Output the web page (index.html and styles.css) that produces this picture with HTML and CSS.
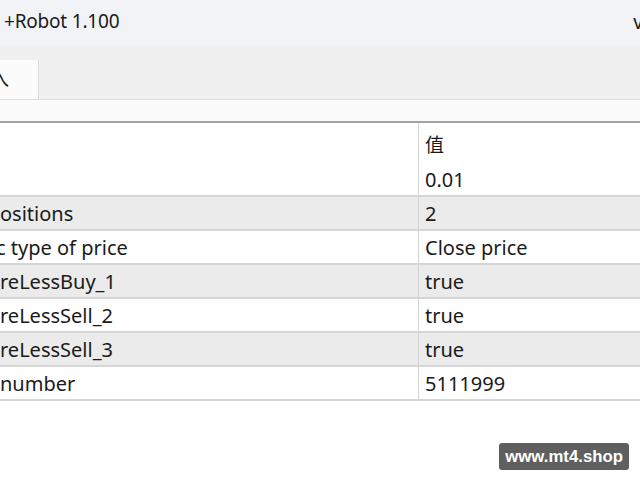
FILE: index.html
```html
<!DOCTYPE html>
<html lang="zh">
<head>
<meta charset="utf-8">
<title>Robot 1.100</title>
<link rel="stylesheet" href="styles.css">
</head>
<body>
<div class="window">
  <header class="titlebar">
    <span class="title">+Robot 1.100</span>
    <span class="title-right">v</span>
  </header>
  <nav class="tabstrip">
    <div class="tab"><span class="tab-label">入</span></div>
  </nav>
  <div class="subbar"></div>
  <div class="params">
    <div class="cell name head"></div>
    <div class="cell value head">值</div>

    <div class="cell name"></div>
    <div class="cell value">0.01</div>

    <div class="cell name alt">ositions</div>
    <div class="cell value alt">2</div>

    <div class="cell name"><span class="clip">c type of price</span></div>
    <div class="cell value">Close price</div>

    <div class="cell name alt">reLessBuy_1</div>
    <div class="cell value alt">true</div>

    <div class="cell name">reLessSell_2</div>
    <div class="cell value">true</div>

    <div class="cell name alt">reLessSell_3</div>
    <div class="cell value alt">true</div>

    <div class="cell name">number</div>
    <div class="cell value">5111999</div>
  </div>
  <div class="footer">
    <span class="badge">www.mt4.shop</span>
  </div>
</div>
</body>
</html>
```

FILE: styles.css
```css
html, body {
  margin: 0;
  padding: 0;
  width: 640px;
  height: 480px;
  overflow: hidden;
  background: #ffffff;
}

.window {
  font-family: "Noto Sans", "Open Sans", "Noto Sans CJK SC", sans-serif;
  color: #1a1a1a;
  font-size: 19px;
}

/* window caption */
.titlebar {
  height: 46px;
  background: #f2f3f7;
  display: flex;
  align-items: center;
  justify-content: space-between;
  padding: 0 0 0 4px;
  overflow: hidden;
}

.title {
  font-size: 19px;
  letter-spacing: -0.2px;
  margin-top: -4px;
}

.title-right {
  margin-right: -3px;
  margin-top: -2px;
}

/* tab strip */
.tabstrip {
  height: 54px;
  background: #f0f0f0;
  border-bottom: 1px solid #dddddd;
  box-sizing: border-box;
  display: flex;
  align-items: flex-end;
}

.tab {
  width: 39px;
  height: 39px;
  background: #fbfbfb;
  border-right: 1px solid #dadada;
  box-sizing: border-box;
  overflow: hidden;
  display: flex;
  align-items: center;
}

.tab-label {
  font-family: "Noto Sans CJK SC", sans-serif;
  font-size: 19px;
  margin-left: -10px;
  margin-top: -4px;
}

.subbar {
  height: 21px;
  background: #fafafa;
}

/* parameter grid */
.params {
  display: grid;
  grid-template-columns: 419px 1fr;
  border-top: 2px solid #a3a3a3;
  font-size: 20px;
}

.cell {
  height: 34px;
  box-sizing: border-box;
  display: flex;
  align-items: center;
  white-space: nowrap;
  overflow: hidden;
  border-bottom: 2px solid #d6d6d6;
  background: #ffffff;
  padding-top: 1px;
}

.cell.name {
  border-right: 1px solid #d3d3d3;
  padding-left: 0;
}

.cell.value {
  padding-left: 6px;
}

.cell.head {
  height: 40px;
  border-bottom: none;
  font-family: "Noto Sans CJK SC", sans-serif;
  font-size: 19px;
}

.cell.alt {
  background: #ebebeb;
}

.clip {
  margin-left: -4px;
}

/* footer area with site badge */
.footer {
  display: flex;
  justify-content: flex-end;
  padding: 42px 11px 0 0;
}

.badge {
  background: #5f5f5f;
  color: #ffffff;
  font-family: "Liberation Sans", Arial, sans-serif;
  font-weight: bold;
  font-size: 16.8px;
  height: 27px;
  line-height: 27px;
  padding: 0 6px;
  border-radius: 3px;
}
```
